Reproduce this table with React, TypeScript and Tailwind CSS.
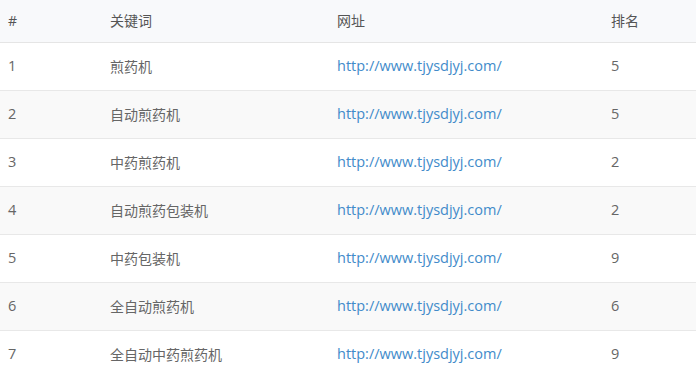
import React from "react";

const rows: [number, string, number][] = [
  [1, "煎药机", 5],
  [2, "自动煎药机", 5],
  [3, "中药煎药机", 2],
  [4, "自动煎药包装机", 2],
  [5, "中药包装机", 9],
  [6, "全自动煎药机", 6],
  [7, "全自动中药煎药机", 9],
];

export default function App() {
  return (
    <div
      className="w-[696px] h-[382px] bg-white overflow-hidden text-[14px] text-[#666]"
      style={{ fontFamily: '"Open Sans", "Noto Sans CJK SC", sans-serif' }}
    >
      <table className="w-[696px] border-collapse table-fixed">
        <colgroup>
          <col className="w-[102px]" />
          <col className="w-[227px]" />
          <col className="w-[274px]" />
          <col className="w-[93px]" />
        </colgroup>
        <thead>
          <tr className="h-[42px] bg-[#f8f9fb] border-b border-[#e5e5e5] text-[#555]">
            <th className="px-2 text-left font-normal">#</th>
            <th className="px-2 text-left font-normal">关键词</th>
            <th className="px-2 text-left font-normal">网址</th>
            <th className="px-2 text-left font-normal">排名</th>
          </tr>
        </thead>
        <tbody>
          {rows.map(([n, k, r]) => (
            <tr
              key={n}
              className={`h-[48px] ${n < 7 ? "border-b border-[#e8e8e8]" : ""} ${n % 2 === 0 ? "bg-[#f9f9f9]" : "bg-white"}`}
            >
              <td className="px-2 text-[14.5px]">{n}</td>
              <td className="px-2">{k}</td>
              <td className="px-2">
                <a className="text-[#428bca] text-[14.5px]" href="#">
                  http://www.tjysdjyj.com/
                </a>
              </td>
              <td className="px-2 text-[14.5px]">{r}</td>
            </tr>
          ))}
        </tbody>
      </table>
    </div>
  );
}
